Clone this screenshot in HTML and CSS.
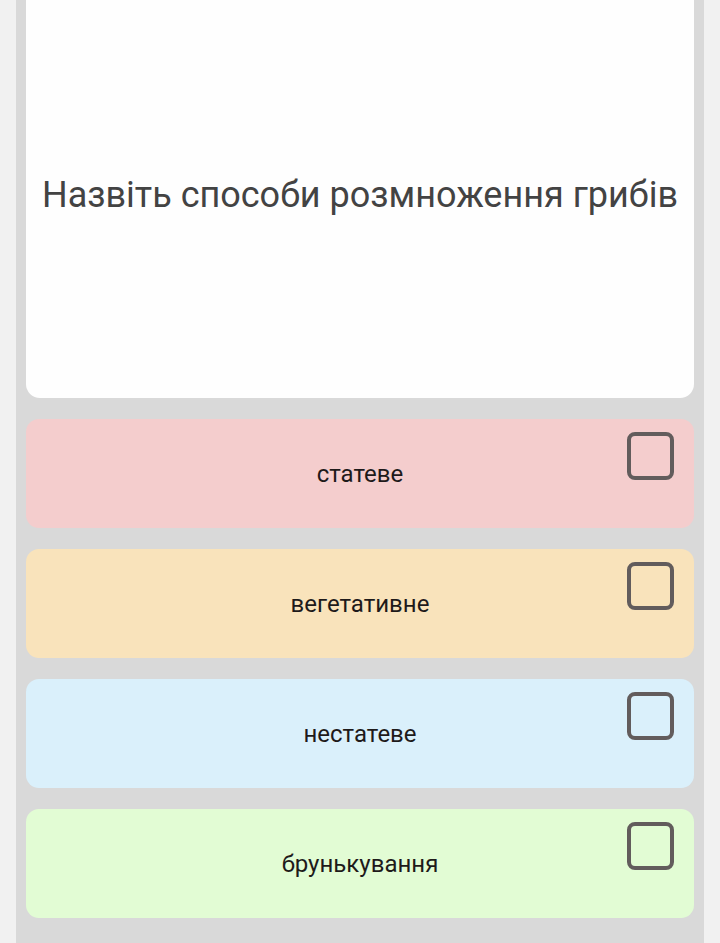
FILE: index.html
```html
<!DOCTYPE html>
<html lang="uk">
<head>
<meta charset="utf-8">
<link rel="stylesheet" href="styles.css">
</head>
<body>
<div class="panel">
  <div class="question">Назвіть способи розмноження грибів</div>
  <div class="option pink"><span>статеве</span><i class="box"></i></div>
  <div class="option peach"><span>вегетативне</span><i class="box"></i></div>
  <div class="option blue"><span>нестатеве</span><i class="box"></i></div>
  <div class="option green"><span>брунькування</span><i class="box"></i></div>
</div>
</body>
</html>
```
FILE: styles.css
```css
html, body { margin: 0; padding: 0; }
body {
  background: #f1f1f1;
  font-family: Roboto, "Noto Sans", sans-serif;
  height: 943px;
  overflow: hidden;
}
.panel {
  margin: 0 16px;
  padding: 0 10px 30px;
  background: #d9d9d9;
  min-height: 943px;
  display: flex;
  flex-direction: column;
  gap: 21px;
}
.question {
  margin-top: -8px;
  height: 406px;
  background: #fefefe;
  border-radius: 0 0 14px 14px;
  display: flex;
  align-items: center;
  justify-content: center;
  text-align: center;
  font-size: 36px;
  color: #434343;
  box-sizing: border-box;
  padding: 0 4px;
}
.option {
  position: relative;
  height: 109px;
  border-radius: 13px;
  display: flex;
  align-items: center;
  justify-content: center;
  font-size: 24px;
  color: #1e1a1a;
}
.pink { background: #f4cdcd; }
.peach { background: #f9e3bb; }
.blue { background: #daf0fb; }
.green { background: #e2fcd4; }
.box {
  position: absolute;
  top: 13px;
  right: 20px;
  width: 39px;
  height: 40px;
  border: 4px solid #625c5c;
  border-radius: 8px;
}
```
